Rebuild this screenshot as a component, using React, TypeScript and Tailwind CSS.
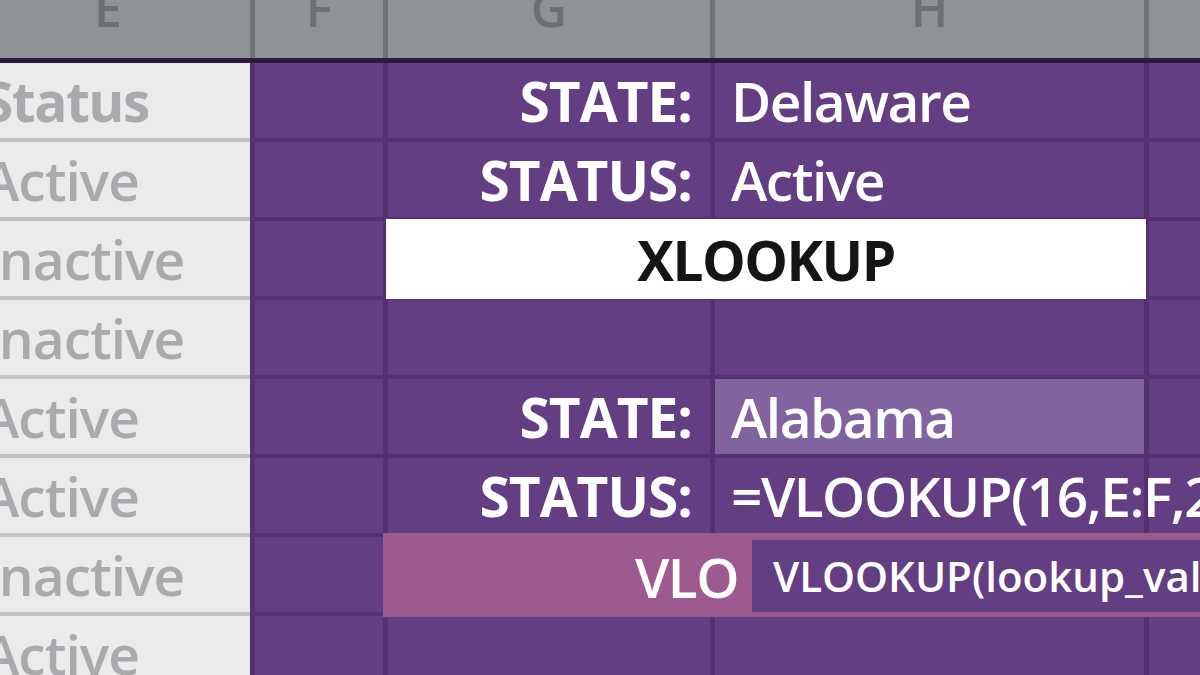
const font = { fontFamily: '"Open Sans", "Noto Sans", sans-serif' };

const eRows: { text: string; bold?: boolean }[] = [
  { text: "Status", bold: true },
  { text: "Active" },
  { text: "Inactive" },
  { text: "Inactive" },
  { text: "Active" },
  { text: "Active" },
  { text: "Inactive" },
  { text: "Active" },
];

function Cell({ className = "", children }: { className?: string; children?: React.ReactNode }) {
  return <div className={`bg-[#633e83] flex items-center ${className}`}>{children}</div>;
}

function HeaderCol({ label, className = "" }: { label: string; className?: string }) {
  return (
    <div className={`flex justify-center items-start overflow-hidden ${className}`}>
      <span className="text-[50px] leading-none font-semibold text-[#6c6f74] -mt-[17px]">{label}</span>
    </div>
  );
}

export default function App() {
  const label = "text-[55px] leading-none font-bold text-white whitespace-nowrap tracking-[-1px]";
  const value = "text-[55px] leading-none font-semibold text-white whitespace-nowrap tracking-[-1.5px]";

  return (
    <div className="w-[1200px] h-[675px] overflow-hidden flex flex-col bg-[#543272]" style={font}>
      {/* column headers */}
      <div className="h-[58px] shrink-0 bg-[#6e7176] flex gap-x-[5px]">
        <HeaderCol label="E" className="w-[250px] bg-[#8f9297] pr-[34px]" />
        <HeaderCol label="F" className="w-[128px] bg-[#8f9297]" />
        <HeaderCol label="G" className="w-[322px] bg-[#8f9297]" />
        <HeaderCol label="H" className="w-[429px] bg-[#8f9297]" />
        <HeaderCol label="" className="flex-1 bg-[#8f9297]" />
      </div>
      <div className="h-[5px] shrink-0 bg-[#2d193c]" />

      <div className="flex gap-x-[5px] flex-1">
        {/* column E */}
        <div className="w-[250px] shrink-0 grid grid-rows-[repeat(8,75px)] gap-y-[4px] bg-[#c2c2c6] content-start">
          {eRows.map((r, i) => (
            <div key={i} className="bg-[#ebebeb] flex items-center overflow-hidden">
              <span
                className={`text-[55px] leading-none text-[#a8aaad] whitespace-nowrap -ml-[17px] ${
                  r.bold ? "font-bold tracking-[-1.5px]" : "font-semibold tracking-[-1px]"
                }`}
              >
                {r.text}
              </span>
            </div>
          ))}
        </div>

        {/* columns F – I */}
        <div className="flex-1 grid grid-cols-[128px_322px_429px_1fr] grid-rows-[repeat(8,75px)] gap-x-[5px] gap-y-[4px] content-start">
          {/* row 1 */}
          <Cell />
          <Cell className="justify-end pr-[18px]">
            <span className={label}>STATE:</span>
          </Cell>
          <Cell className="pl-[16px]">
            <span className={value}>Delaware</span>
          </Cell>
          <Cell />

          {/* row 2 */}
          <Cell />
          <Cell className="justify-end pr-[18px]">
            <span className={label}>STATUS:</span>
          </Cell>
          <Cell className="pl-[16px]">
            <span className={value}>Active</span>
          </Cell>
          <Cell />

          {/* row 3 */}
          <Cell />
          <div className="col-span-2 bg-white flex items-center justify-center -mx-[2px] -mt-[2px] -mb-[3px] relative z-10">
            <span className="text-[55px] leading-none font-bold text-[#151515] tracking-[-1.5px]">XLOOKUP</span>
          </div>
          <Cell />

          {/* row 4 */}
          <Cell />
          <Cell />
          <Cell />
          <Cell />

          {/* row 5 */}
          <Cell />
          <Cell className="justify-end pr-[18px]">
            <span className={label}>STATE:</span>
          </Cell>
          <div className="bg-[#8163a0] flex items-center pl-[16px]">
            <span className={value}>Alabama</span>
          </div>
          <Cell />

          {/* row 6 */}
          <Cell />
          <Cell className="justify-end pr-[18px]">
            <span className={label}>STATUS:</span>
          </Cell>
          <Cell className="pl-[16px] relative z-10">
            <span className={value}>=VLOOKUP(16,E:F,2,FALSE)</span>
          </Cell>
          <Cell />

          {/* row 7: formula being typed, with the function tooltip */}
          <Cell />
          <div className="col-span-3 -ml-[5px] -mt-[4px] -mb-[5px] bg-[#9c5a8e] flex pt-[7px] pb-[5px] relative z-20">
            <div className="w-[369px] shrink-0 flex items-center justify-end pr-[14px]">
              <span className="text-[55px] leading-none font-semibold text-white tracking-[-1.5px]">VLO</span>
            </div>
            <div className="flex-1 bg-[#633e83] flex items-center pl-[21px] overflow-hidden">
              <span className="text-[42px] leading-none font-semibold text-white whitespace-nowrap">
                VLOOKUP(lookup_value, table_array, col_index_num)
              </span>
            </div>
          </div>

          {/* row 8 */}
          <Cell />
          <Cell />
          <Cell />
          <Cell />
        </div>
      </div>
    </div>
  );
}
